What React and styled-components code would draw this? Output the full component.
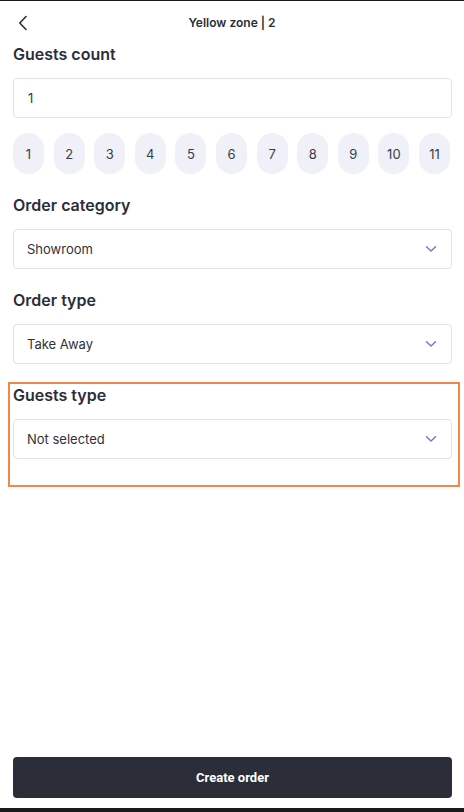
import React from "react";
import styled, { createGlobalStyle } from "styled-components";

const GlobalStyle = createGlobalStyle`
  html, body {
    margin: 0;
    padding: 0;
    background: #ffffff;
  }
  * {
    box-sizing: border-box;
  }
`;

const Frame = styled.div`
  height: 812px;
  display: flex;
  flex-direction: column;
  border-top: 1px solid #1a1a1a;
  border-bottom: 4px solid #1a1a1a;
  font-family: Inter, "Noto Sans", sans-serif;
  color: #2b2e38;
  overflow: hidden;
`;

const Header = styled.div`
  height: 43px;
  display: flex;
  align-items: center;
  justify-content: center;
  position: relative;
  padding: 0 13px;
`;

const BackButton = styled.button`
  position: absolute;
  left: 14px;
  top: 12px;
  width: 18px;
  height: 20px;
  padding: 0;
  border: none;
  background: none;
  display: flex;
  align-items: center;
  justify-content: center;
  cursor: pointer;
`;

const Title = styled.div`
  font-size: 12px;
  font-weight: 600;
  color: #2b2e38;
`;

const Content = styled.div`
  flex: 1;
  display: flex;
  flex-direction: column;
  padding: 0 12px 0 13px;
`;

const Section = styled.div`
  display: flex;
  flex-direction: column;
  gap: 14px;
  margin-top: ${(p) => p.$top || 0}px;
`;

const Highlight = styled(Section)`
  margin-left: -5px;
  margin-right: -8px;
  padding: 1px 6px 26px 3px;
  border: 2px solid #f0874b;
`;

const Heading = styled.h3`
  margin: 0;
  font-size: 16px;
  line-height: 20px;
  font-weight: 600;
  color: #2b2e38;
`;

const Input = styled.div`
  height: 40px;
  border: 1px solid #e4e4ea;
  border-radius: 4px;
  display: flex;
  align-items: center;
  padding: 0 14px;
  font-size: 13px;
  color: #3a3c44;
`;

const ChipRow = styled.div`
  display: flex;
  gap: 9.6px;
  margin-top: 15px;
  overflow: hidden;
`;

const Chip = styled.div`
  flex: 0 0 31px;
  height: 41px;
  border-radius: 16px;
  background: #f0f0f8;
  display: flex;
  align-items: center;
  justify-content: center;
  font-size: 13px;
  color: #3a3c44;
`;

const Select = styled.div`
  height: 40px;
  border: 1.5px solid #e2e2ea;
  border-radius: 4px;
  display: flex;
  align-items: center;
  justify-content: space-between;
  padding: 0 14px 0 13px;
  font-size: 13px;
  color: #2f3139;
`;

const Footer = styled.div`
  padding: 0 12px 10px 13px;
`;

const CreateButton = styled.button`
  width: 100%;
  height: 41px;
  border: none;
  border-radius: 4px;
  background: #2b2e38;
  color: #ffffff;
  font-family: Roboto, "Noto Sans", sans-serif;
  font-size: 13px;
  font-weight: 700;
  cursor: pointer;
`;

const BackIcon = () => (
  <svg width="10" height="16" viewBox="0 0 10 16" fill="none">
    <path d="M8 1.5L1.8 8L8 14.5" stroke="#2b2e38" strokeWidth="1.6" strokeLinecap="round" strokeLinejoin="round" />
  </svg>
);

const Chevron = () => (
  <svg width="12" height="8" viewBox="0 0 12 8" fill="none">
    <path d="M1.5 1.8L6 6L10.5 1.8" stroke="#7c6cd0" strokeWidth="1.4" strokeLinecap="round" strokeLinejoin="round" />
  </svg>
);

const Dropdown = ({ value }) => (
  <Select>
    {value}
    <Chevron />
  </Select>
);

const counts = Array.from({ length: 11 }, (_, i) => i + 1);

const App = () => {
  return (
    <>
      <GlobalStyle />
      <Frame>
        <Header>
          <BackButton>
            <BackIcon />
          </BackButton>
          <Title>Yellow zone | 2</Title>
        </Header>
        <Content>
          <Section>
            <Heading>Guests count</Heading>
            <Input>1</Input>
          </Section>
          <ChipRow>
            {counts.map((n) => (
              <Chip key={n}>{n}</Chip>
            ))}
          </ChipRow>
          <Section $top={21}>
            <Heading>Order category</Heading>
            <Dropdown value="Showroom" />
          </Section>
          <Section $top={21}>
            <Heading>Order type</Heading>
            <Dropdown value="Take Away" />
          </Section>
          <Highlight $top={18}>
            <Heading>Guests type</Heading>
            <Dropdown value="Not selected" />
          </Highlight>
        </Content>
        <Footer>
          <CreateButton>Create order</CreateButton>
        </Footer>
      </Frame>
    </>
  );
};

export default App;
